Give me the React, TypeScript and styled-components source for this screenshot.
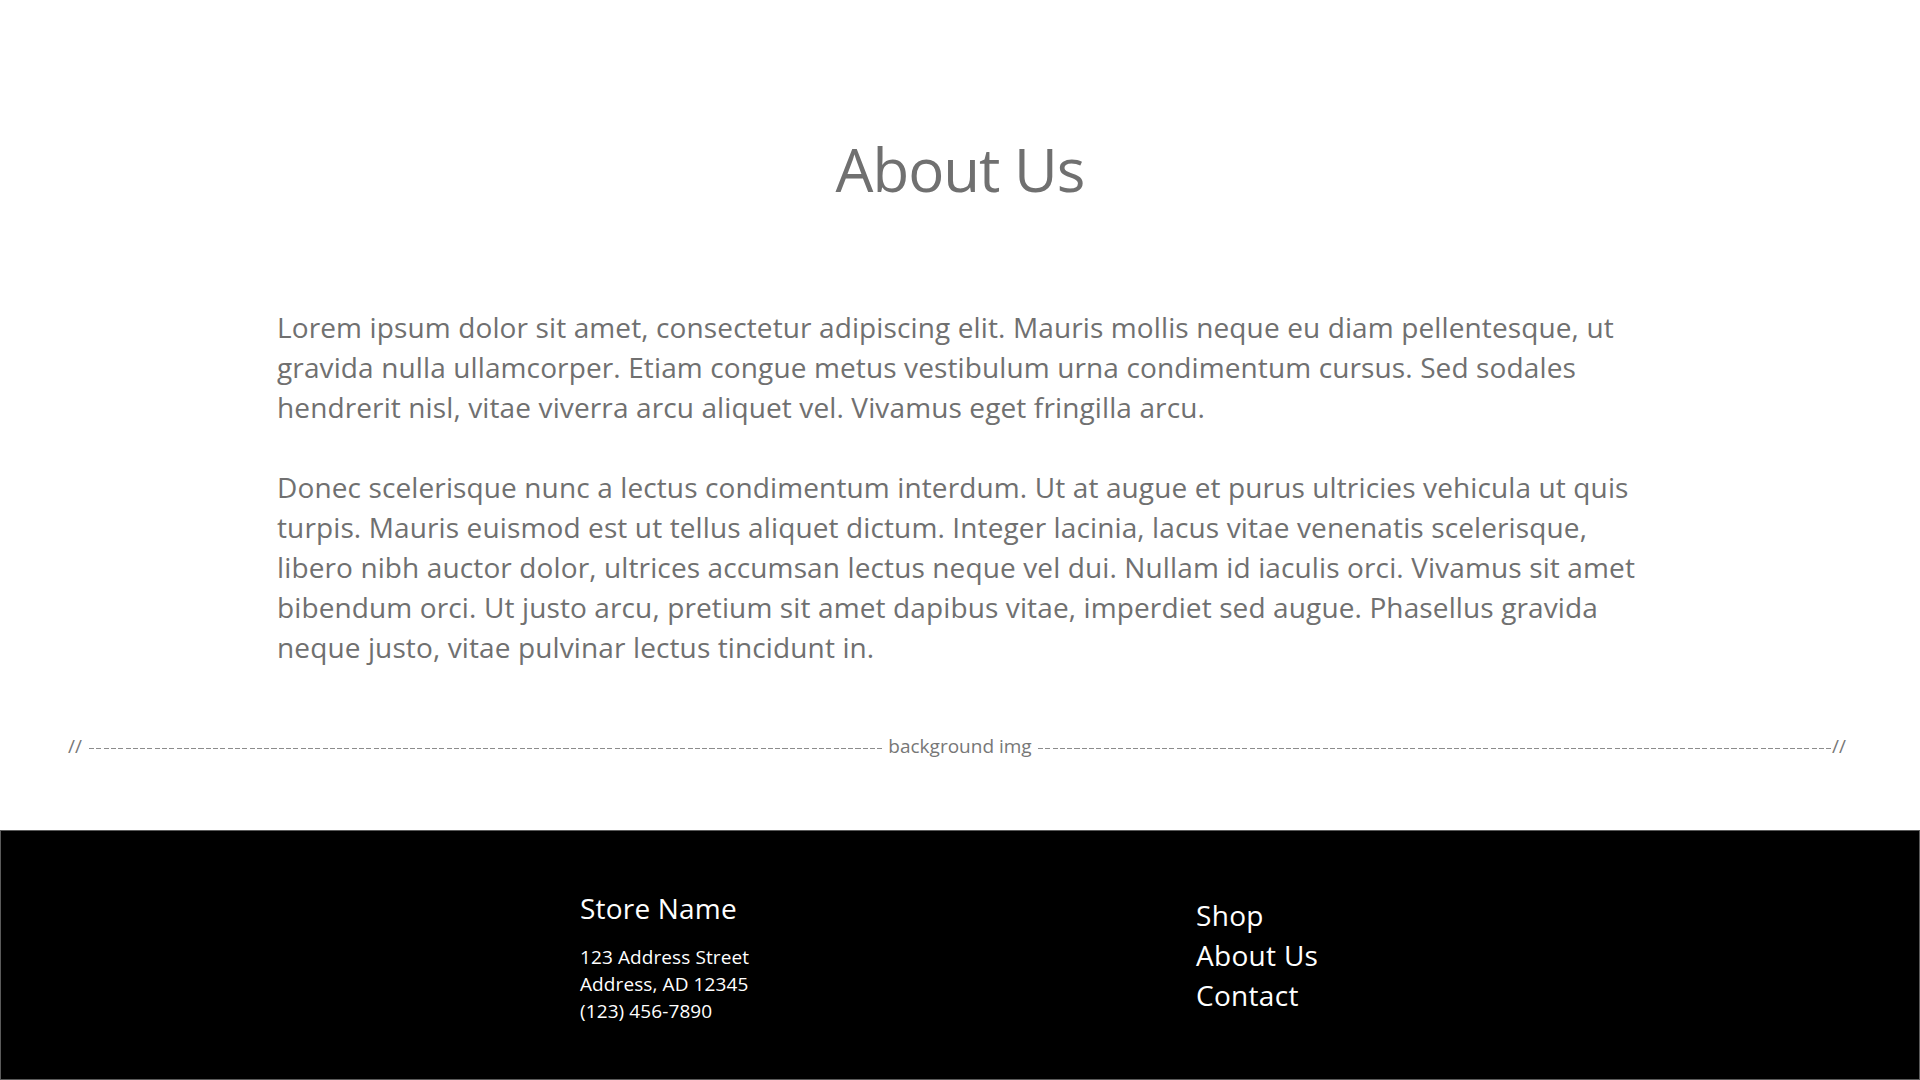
import React from "react";
import styled, { createGlobalStyle } from "styled-components";

const GlobalStyle = createGlobalStyle`
  html, body {
    margin: 0;
    padding: 0;
    background: #ffffff;
  }
  body {
    font-family: "Open Sans", "Noto Sans", "Liberation Sans", sans-serif;
  }
  * { box-sizing: border-box; }
`;

const Page = styled.div`
  min-height: 100vh;
  display: flex;
  flex-direction: column;
`;

const Main = styled.main`
  display: flex;
  flex-direction: column;
  align-items: center;
  padding-top: 129px;
`;

const Title = styled.h1`
  margin: 0;
  font-size: 60px;
  line-height: 80px;
  font-weight: 400;
  color: #707070;
  letter-spacing: -1px;
`;

const Article = styled.article`
  align-self: flex-start;
  width: 1378px;
  margin-top: 98px;
  margin-left: 277px;
`;

const Paragraph = styled.p`
  margin: 0 0 40px;
  font-size: 28px;
  line-height: 40px;
  color: #707070;
  letter-spacing: 0.12px;
  &:last-child { margin-bottom: 0; }
`;

const Note = styled.div`
  margin: 66px 0 0 68px;
  width: 1778px;
  display: flex;
  align-items: center;
  font-size: 19px;
  line-height: 27px;
  color: #777777;
  white-space: nowrap;
`;

const Dashes = styled.span<{ $before: number; $after: number }>`
  flex: 1;
  height: 1px;
  margin: 3px ${(p) => p.$after}px 0 ${(p) => p.$before}px;
  background: repeating-linear-gradient(
    to right,
    #8c8c8c 0 5px,
    transparent 5px 7.3px
  );
`;

const Footer = styled.footer`
  margin-top: auto;
  height: 250px;
  background: #000000;
  border: 1px solid #5a5a5a;
  display: grid;
  grid-template-columns: 616px auto;
  align-items: center;
  padding-left: 579px;
  color: #ffffff;
`;

const StoreBlock = styled.div`
  display: flex;
  flex-direction: column;
  margin-top: 5px;
`;

const StoreName = styled.h2`
  margin: 0 0 17px;
  font-size: 28px;
  line-height: 37px;
  font-weight: 400;
  letter-spacing: 0.2px;
`;

const AddressLine = styled.div`
  font-size: 19px;
  line-height: 27px;
  letter-spacing: 0.1px;
`;

const NavList = styled.nav`
  display: flex;
  flex-direction: column;
`;

const NavLink = styled.a`
  color: #ffffff;
  text-decoration: none;
  font-size: 28px;
  line-height: 40px;
  letter-spacing: 0.3px;
`;

export default function App() {
  return (
    <>
      <GlobalStyle />
      <Page>
        <Main>
          <Title>About Us</Title>
          <Article>
            <Paragraph>
              Lorem ipsum dolor sit amet, consectetur adipiscing elit. Mauris mollis neque eu diam pellentesque, ut
              gravida nulla ullamcorper. Etiam congue metus vestibulum urna condimentum cursus. Sed sodales hendrerit
              nisl, vitae viverra arcu aliquet vel. Vivamus eget fringilla arcu.
            </Paragraph>
            <Paragraph>
              Donec scelerisque nunc a lectus condimentum interdum. Ut at augue et purus ultricies vehicula ut quis
              turpis. Mauris euismod est ut tellus aliquet dictum. Integer lacinia, lacus vitae venenatis scelerisque,
              libero nibh auctor dolor, ultrices accumsan lectus neque vel dui. Nullam id iaculis orci. Vivamus sit amet
              bibendum orci. Ut justo arcu, pretium sit amet dapibus vitae, imperdiet sed augue. Phasellus gravida neque
              justo, vitae pulvinar lectus tincidunt in.
            </Paragraph>
          </Article>
        </Main>
        <Note>
          <span>//</span>
          <Dashes $before={7} $after={6} />
          <span>background img</span>
          <Dashes $before={6} $after={1} />
          <span>//</span>
        </Note>
        <Footer>
          <StoreBlock>
            <StoreName>Store Name</StoreName>
            <AddressLine>123 Address Street</AddressLine>
            <AddressLine>Address, AD 12345</AddressLine>
            <AddressLine>(123) 456-7890</AddressLine>
          </StoreBlock>
          <NavList>
            <NavLink href="#">Shop</NavLink>
            <NavLink href="#">About Us</NavLink>
            <NavLink href="#">Contact</NavLink>
          </NavList>
        </Footer>
      </Page>
    </>
  );
}
